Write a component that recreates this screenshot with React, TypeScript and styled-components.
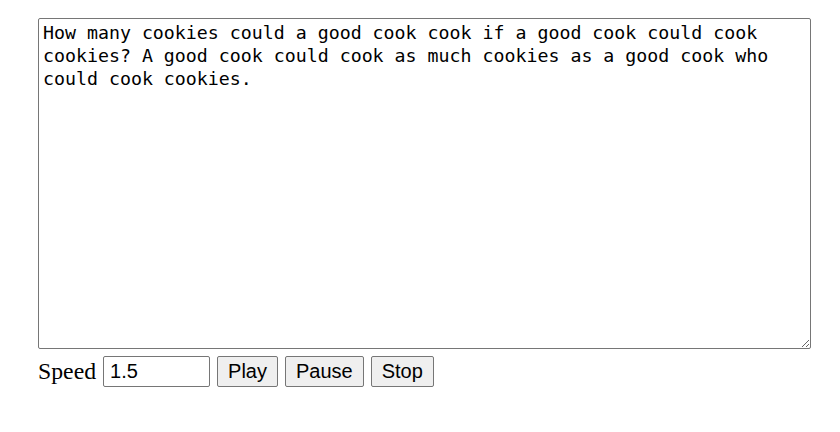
import { useState } from "react"
import styled, { createGlobalStyle } from "styled-components"

const GlobalStyle = createGlobalStyle`
	html, body {
		margin: 0;
		background: #ffffff;
	}
`

const S = {
	Page: styled.div`
		display: flex;
		flex-direction: column;
		align-items: flex-start;
		gap: 7px;
		padding: 18px 0 0 38px;
	`,
	Editor: styled.textarea`
		box-sizing: border-box;
		width: 773px;
		height: 331px;
		margin: 0;
		padding: 2px 2px 2px 4px;
		border: 1px solid #767676;
		border-radius: 2px;
		font-family: "DejaVu Sans Mono", monospace;
		font-size: 18.25px;
		line-height: 23px;
		color: #000000;
		resize: both;
		outline: none;
	`,
	Controls: styled.div`
		display: flex;
		align-items: center;
		gap: 7px;
	`,
	Label: styled.label`
		font-family: "Liberation Serif", serif;
		font-size: 23.75px;
		color: #000000;
	`,
	Field: styled.input`
		box-sizing: border-box;
		width: 107px;
		height: 31px;
		margin: 0;
		padding: 1px 6px;
		border: 1px solid #767676;
		border-radius: 2px;
		font-family: "Liberation Sans", Arial, sans-serif;
		font-size: 20px;
		color: #000000;
		outline: none;
	`,
	Button: styled.button`
		box-sizing: border-box;
		height: 31px;
		margin: 0;
		padding: 0 10px;
		border: 1px solid #767676;
		border-radius: 2px;
		background: #efefef;
		font-family: "Liberation Sans", Arial, sans-serif;
		font-size: 20px;
		color: #000000;
		cursor: default;
	`,
}

const TEXT =
	"How many cookies could a good cook cook if a good cook could cook cookies? A good cook could cook as much cookies as a good cook who could cook cookies."

export default function App() {
	const [text, setText] = useState(TEXT)
	const [speed, setSpeed] = useState("1.5")

	return (
		<>
			<GlobalStyle />
			<S.Page>
				<S.Editor value={text} onChange={e => setText(e.target.value)} spellCheck={false} />
				<S.Controls>
					<S.Label htmlFor="speed">Speed</S.Label>
					<S.Field id="speed" value={speed} onChange={e => setSpeed(e.target.value)} />
					<S.Button>Play</S.Button>
					<S.Button>Pause</S.Button>
					<S.Button>Stop</S.Button>
				</S.Controls>
			</S.Page>
		</>
	)
}
